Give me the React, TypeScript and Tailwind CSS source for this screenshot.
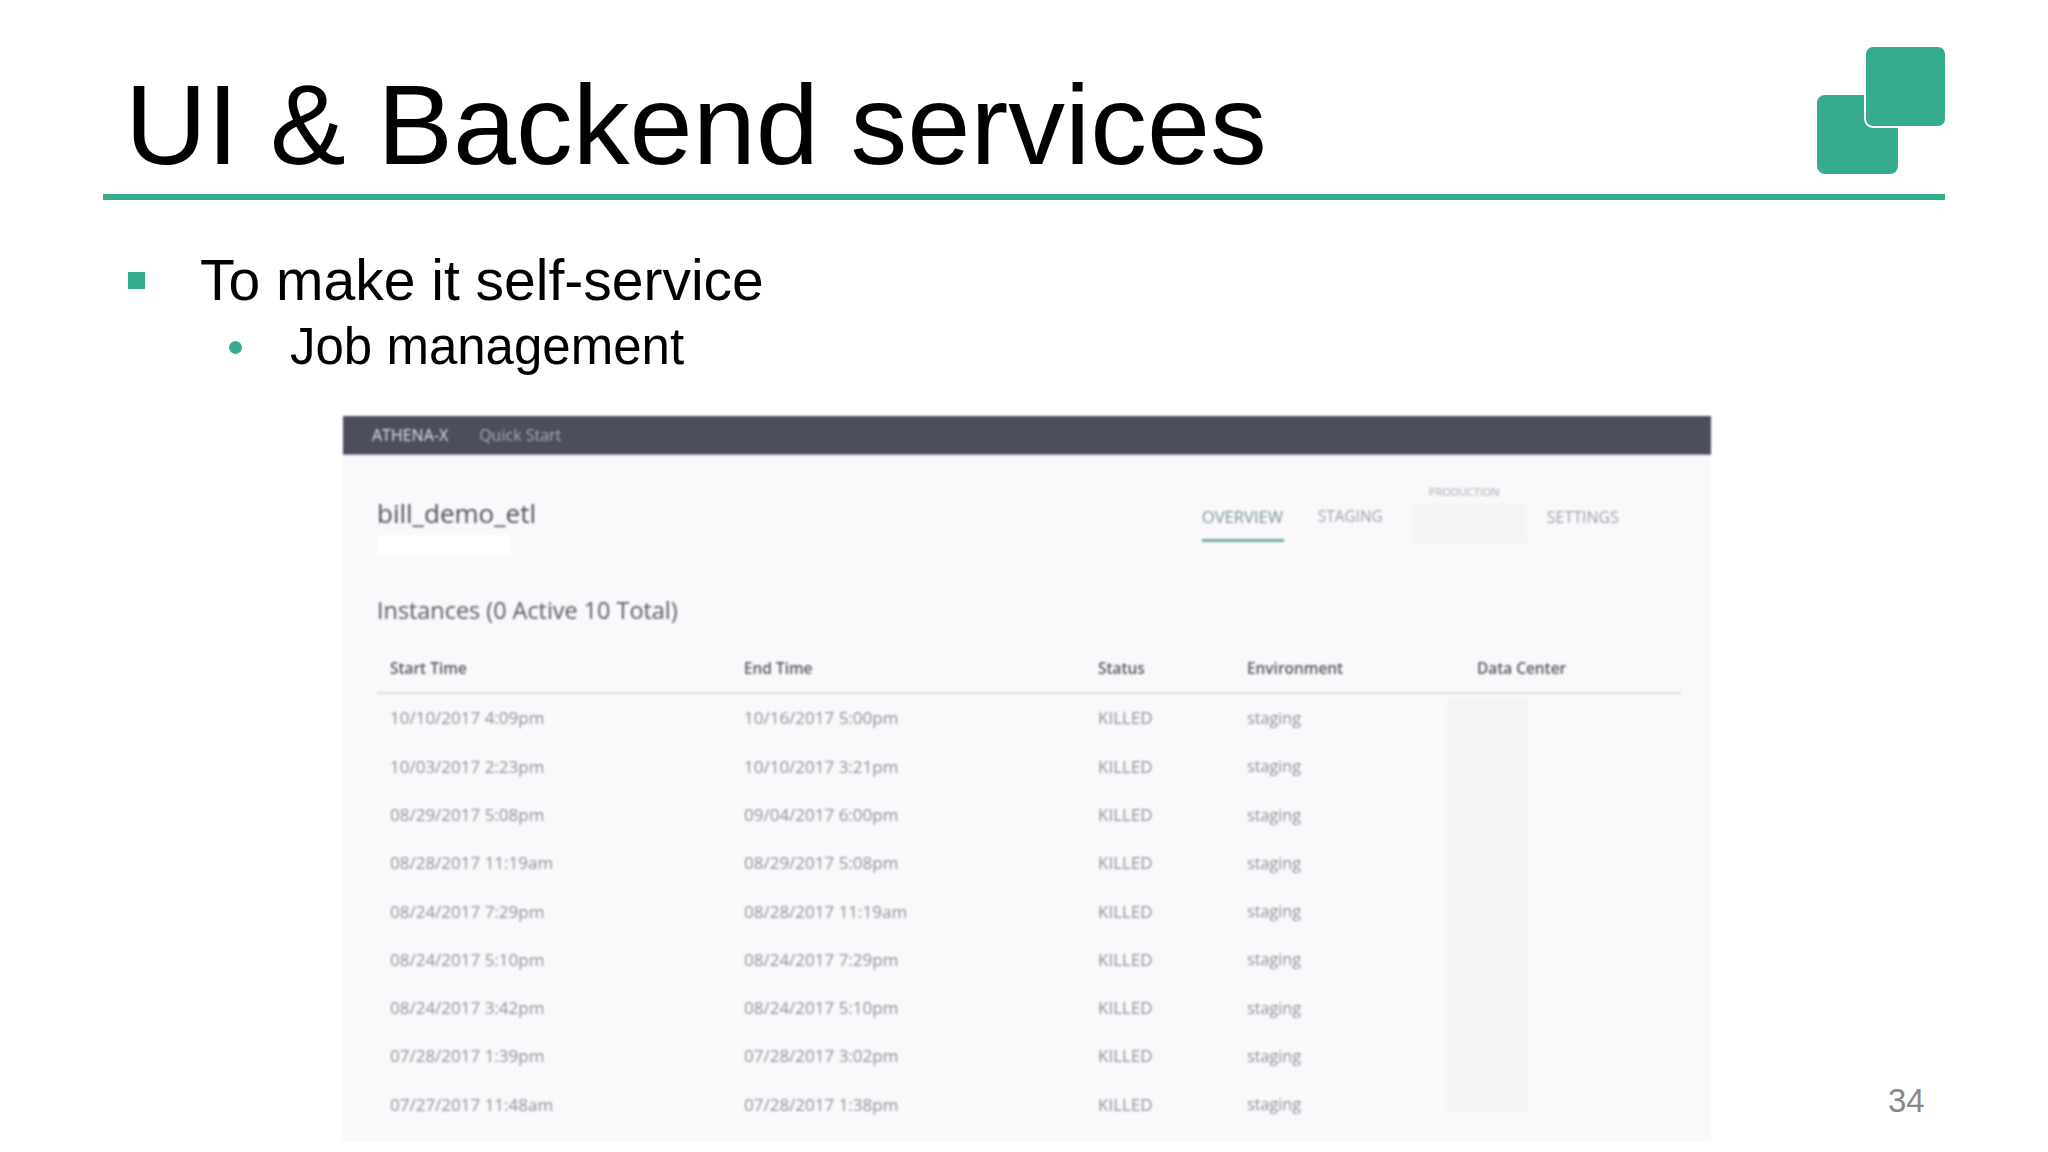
const jobs = [
  ["10/10/2017 4:09pm", "10/16/2017 5:00pm"],
  ["10/03/2017 2:23pm", "10/10/2017 3:21pm"],
  ["08/29/2017 5:08pm", "09/04/2017 6:00pm"],
  ["08/28/2017 11:19am", "08/29/2017 5:08pm"],
  ["08/24/2017 7:29pm", "08/28/2017 11:19am"],
  ["08/24/2017 5:10pm", "08/24/2017 7:29pm"],
  ["08/24/2017 3:42pm", "08/24/2017 5:10pm"],
  ["07/28/2017 1:39pm", "07/28/2017 3:02pm"],
  ["07/27/2017 11:48am", "07/28/2017 1:38pm"],
];

function Logo() {
  return (
    <svg width="130" height="130" viewBox="0 0 130 130" className="shrink-0">
      <rect x="1" y="49" width="81" height="79" rx="8" fill="#36ab8e" />
      <rect x="49" y="0" width="81" height="81" rx="8" fill="#36ab8e" stroke="#ffffff" strokeWidth="2" />
    </svg>
  );
}

function JobsPanel() {
  return (
    <div className="w-[1368px] h-[726px] bg-[#f9f8fb] font-['Open_Sans',sans-serif] blur-[0.8px] overflow-hidden">
      {/* Nav */}
      <div className="h-[39px] bg-[#4c4e5c] border-b border-[#8a8b94] pl-[29px] flex items-center gap-[31px] text-[16px]">
        <span className="text-[#e0e1e6]">ATHENA-X</span>
        <span className="text-[#aaacb6]">Quick Start</span>
      </div>

      {/* Job title and tabs */}
      <div className="relative h-[140px] pl-[34px] pr-[28px] flex items-start justify-between">
        <div className="pt-[40px]">
          <h2 className="text-[26px] leading-[36px] text-[#50505a]">bill_demo_etl</h2>
          <div className="mt-[4px] w-[133px] h-[20px] bg-white" />
        </div>
        <div className="flex items-start text-[15.5px] text-[#a0a1a7] pt-[50px] pr-[64px]">
          <div className="w-[116px]">
            <span className="text-[#7a9691] text-[16.6px]">OVERVIEW</span>
            <div className="w-[82px] h-[3px] mt-[9px] bg-[#79a89b]" />
          </div>
          <span className="w-[95px] text-[15.4px]">STAGING</span>
          <div className="w-[134px] -mt-[20px] pl-[16px]">
            <div className="text-[11px] leading-[14px] text-[#a8a9ae]">PRODUCTION</div>
            <div className="-ml-[16px] mt-[5px] w-[114px] h-[39px] bg-[#f4f4f5]" />
          </div>
          <span className="text-[16px]">SETTINGS</span>
        </div>
      </div>

      <div className="pl-[34px] pr-[30px]">
        <h3 className="text-[23.4px] leading-[30px] text-[#5a5a64]">Instances (0 Active 10 Total)</h3>
        <div className="relative mt-[21px]">
          {/* Redacted column */}
          <div className="absolute left-[1070px] top-[52px] w-[81px] h-[415px] bg-[#f4f4f5]" />
          <div className="grid grid-cols-[354px_354px_149px_230px_1fr] pl-[13px] h-[48px] items-center border-b-2 border-[#dededf] text-[15.4px] font-semibold text-[#58585f]">
            <span>Start Time</span>
            <span>End Time</span>
            <span>Status</span>
            <span>Environment</span>
            <span>Data Center</span>
          </div>
          {jobs.map((job) => (
            <div
              key={job[0]}
              className="relative grid grid-cols-[354px_354px_149px_230px_1fr] pl-[13px] h-[48.3px] items-center text-[17px] text-[#919197]"
            >
              <span>{job[0]}</span>
              <span>{job[1]}</span>
              <span>KILLED</span>
              <span className="text-[16.2px]">staging</span>
              <span />
            </div>
          ))}
        </div>
      </div>
    </div>
  );
}

export default function App() {
  return (
    <div className="w-[2048px] h-[1152px] bg-white overflow-hidden font-['Liberation_Sans',Arial,sans-serif] text-black">
      {/* Title */}
      <header className="ml-[103px] w-[1842px] h-[200px] pt-[46px] flex justify-between border-b-[6px] border-[#36ab8e]">
        <h1 className="pl-[22px] pt-[19px] text-[113.5px] leading-[120px] blur-[0.4px]">UI &amp; Backend services</h1>
        <div className="-mr-px">
          <Logo />
        </div>
      </header>

      {/* Bullets */}
      <div className="mt-[48px] ml-[128px] flex items-center gap-[55px]">
        <span className="w-[17px] h-[17px] bg-[#36ab8e]" />
        <span className="text-[57px] leading-[64px] blur-[0.4px]">To make it self-service</span>
      </div>
      <div className="mt-[4px] ml-[229px] flex items-center gap-[48px]">
        <span className="w-[13px] h-[13px] rounded-full bg-[#36ab8e]" />
        <span className="text-[51px] leading-[62px] blur-[0.4px]">Job management</span>
      </div>

      {/* Screenshot and page number */}
      <div className="mt-[38px] ml-[343px] flex items-end">
        <JobsPanel />
        <span className="ml-[177px] mb-[21px] text-[33px] leading-[40px] text-[#898989]">34</span>
      </div>
    </div>
  );
}
